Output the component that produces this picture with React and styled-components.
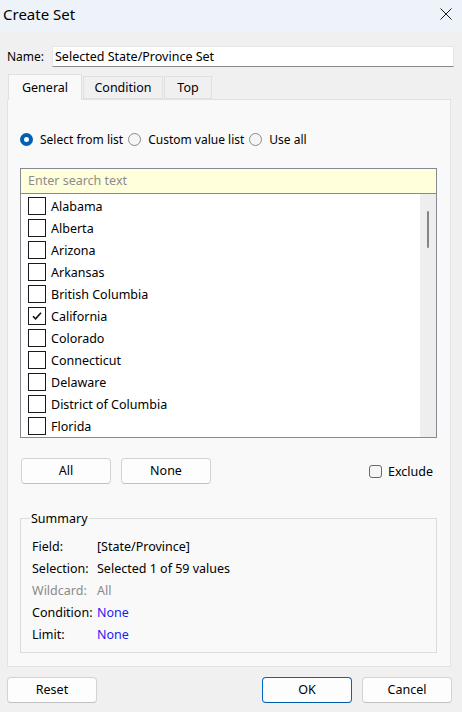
import styled, { createGlobalStyle } from "styled-components";

const GlobalStyle = createGlobalStyle`
  html, body {
    margin: 0;
    padding: 0;
    background: #f0f0f0;
  }
  body {
    font-family: "Noto Sans", "Open Sans", sans-serif;
    font-size: 12px;
    color: #000;
  }
`;

const STATES = [
  "Alabama",
  "Alberta",
  "Arizona",
  "Arkansas",
  "British Columbia",
  "California",
  "Colorado",
  "Connecticut",
  "Delaware",
  "District of Columbia",
  "Florida",
];
const SELECTED = ["California"];

const SUMMARY = [
  { label: "Field:", value: "[State/Province]" },
  { label: "Selection:", value: "Selected 1 of 59 values" },
  { label: "Wildcard:", value: "All", muted: true },
  { label: "Condition:", value: "None", link: true },
  { label: "Limit:", value: "None", link: true },
];

const Dialog = styled.div`
  width: 462px;
  height: 712px;
  display: flex;
  flex-direction: column;
  background: #f0f0f0;
  overflow: hidden;
`;

const TitleBar = styled.div`
  height: 32px;
  flex: none;
  display: flex;
  align-items: center;
  justify-content: space-between;
  padding: 0 10px 0 3px;
  background: #eef3fa;
`;

const Title = styled.span`
  font-size: 15px;
  margin-top: -4px;
`;

const CloseButton = styled.button`
  border: 0;
  background: none;
  padding: 0;
  width: 12px;
  height: 12px;
  margin-top: -4px;
  display: flex;
  svg {
    display: block;
  }
`;

const Body = styled.div`
  flex: 1;
  display: flex;
  flex-direction: column;
  padding: 0 8px 0 7px;
`;

const NameRow = styled.div`
  display: flex;
  align-items: center;
  margin-top: 14px;
`;

const NameLabel = styled.label`
  width: 45px;
  flex: none;
`;

const NameInput = styled.input`
  flex: 1;
  height: 21px;
  box-sizing: border-box;
  border: 1px solid #e6e6e6;
  border-bottom-color: #8a8a8a;
  border-radius: 2px 2px 0 0;
  background: #fff;
  font: inherit;
  font-size: 12.5px;
  padding: 0 2px 1px;
  outline: none;
`;

const TabStrip = styled.div`
  display: flex;
  align-items: flex-end;
  height: 24px;
  margin-top: 8px;
  padding-left: 1px;
  position: relative;
  z-index: 1;
`;

const Tab = styled.div`
  box-sizing: border-box;
  width: ${(p) => p.$width}px;
  height: ${(p) => (p.$active ? 26 : 23)}px;
  margin-bottom: ${(p) => (p.$active ? -1 : 0)}px;
  margin-right: 1px;
  display: flex;
  align-items: center;
  justify-content: center;
  padding-bottom: ${(p) => (p.$active ? 1 : 0)}px;
  border: 1px solid #e0e0e0;
  border-bottom: ${(p) => (p.$active ? "0" : "1px solid #e0e0e0")};
  background: ${(p) => (p.$active ? "#f9f9f9" : "#f0f0f0")};
  font-size: 12.5px;
`;

const Pane = styled.div`
  box-sizing: border-box;
  height: 568px;
  display: flex;
  flex-direction: column;
  padding: 0 13px 0 12px;
  background: #f9f9f9;
  border: 1px solid #e2e2e2;
  margin-right: 3px;
`;

const RadioRow = styled.div`
  display: flex;
  align-items: center;
  margin-top: 31px;
  height: 16px;
`;

const RadioOption = styled.label`
  display: flex;
  align-items: center;
  margin-right: 5px;
`;

const RadioDot = styled.span`
  box-sizing: border-box;
  width: 13px;
  height: 13px;
  border-radius: 50%;
  margin-right: 7px;
  border: ${(p) => (p.$checked ? "4px solid #005fb8" : "1px solid #8a8a8a")};
  background: ${(p) => (p.$checked ? "#fff" : "#f5f5f5")};
`;

const ListBox = styled.div`
  margin-top: 21px;
  height: 270px;
  box-sizing: border-box;
  border: 1px solid #878a92;
  display: flex;
  flex-direction: column;
  background: #fff;
`;

const Search = styled.input`
  height: 25px;
  flex: none;
  box-sizing: border-box;
  border: 0;
  border-bottom: 1px solid #878a92;
  background: #ffffdb;
  font: inherit;
  font-size: 12.5px;
  padding: 0 7px 1px;
  outline: none;
  &::placeholder {
    color: #8c8c8c;
  }
`;

const ListArea = styled.div`
  flex: 1;
  display: flex;
  min-height: 0;
`;

const Rows = styled.div`
  flex: 1;
  padding-top: 1px;
`;

const Row = styled.div`
  height: 22px;
  display: flex;
  align-items: center;
  padding-left: 7px;
  font-size: 12.5px;
`;

const Box = styled.span`
  box-sizing: border-box;
  width: 18px;
  height: 18px;
  border: 1px solid #1a1a1a;
  margin-right: 5px;
  display: flex;
  align-items: center;
  justify-content: center;
`;

const ScrollTrack = styled.div`
  width: 16px;
  flex: none;
  background: #eeeeee;
  display: flex;
  justify-content: center;
  padding-top: 17px;
`;

const ScrollThumb = styled.div`
  width: 2px;
  height: 37px;
  border-radius: 1px;
  background: #858585;
`;

const ActionRow = styled.div`
  display: flex;
  align-items: center;
  margin-top: 20px;
  padding-left: 1px;
`;

const Button = styled.button`
  box-sizing: border-box;
  width: 90px;
  height: 26px;
  margin-right: ${(p) => (p.$last ? 2 : 10)}px;
  border: 1px solid ${(p) => (p.$primary ? "#0067c0" : "#d3d3d3")};
  border-bottom-color: ${(p) => (p.$primary ? "#0058a8" : "#c0c0c0")};
  border-radius: 4px;
  background: #fdfdfd;
  font: inherit;
  font-size: 12.5px;
  color: #000;
  padding: 0 0 1px;
`;

const ExcludeToggle = styled.label`
  margin-left: auto;
  margin-right: 4px;
  display: flex;
  align-items: center;
  font-size: 12.5px;
`;

const SmallBox = styled.span`
  box-sizing: border-box;
  width: 13px;
  height: 13px;
  border: 1px solid #6a6a6a;
  border-radius: 3px;
  background: #f6f6f6;
  margin-right: 6px;
`;

const Summary = styled.fieldset`
  margin: 26px 0 0;
  padding: 8px 9px 7px 11px;
  border: 1px solid #dcdcdc;
  min-width: 0;
`;

const Legend = styled.legend`
  padding: 0 1px;
  margin-left: -2px;
  font-size: 12.5px;
`;

const SummaryRow = styled.div`
  height: 22px;
  display: flex;
  align-items: center;
  font-size: 12.5px;
  color: ${(p) => (p.$muted ? "#8a8a8a" : "#000")};
`;

const SummaryLabel = styled.span`
  width: 65px;
  flex: none;
`;

const SummaryValue = styled.span`
  color: ${(p) => (p.$link ? "#1c1cf5" : "inherit")};
`;

const Footer = styled.div`
  display: flex;
  margin-top: 10px;
`;

const Spacer = styled.div`
  flex: 1;
`;

function Check() {
  return (
    <svg width="12" height="12" viewBox="0 0 12 12">
      <path d="M2 6.2 L4.6 8.8 L10 2.8" fill="none" stroke="#111" strokeWidth="1.6" />
    </svg>
  );
}

export default function App() {
  return (
    <Dialog>
      <GlobalStyle />
      <TitleBar>
        <Title>Create Set</Title>
        <CloseButton aria-label="Close">
          <svg width="12" height="12" viewBox="0 0 12 12">
            <path d="M0.5 0.5 L11.5 11.5 M11.5 0.5 L0.5 11.5" stroke="#1b1b1b" strokeWidth="1" />
          </svg>
        </CloseButton>
      </TitleBar>
      <Body>
        <NameRow>
          <NameLabel>Name:</NameLabel>
          <NameInput defaultValue="Selected State/Province Set" />
        </NameRow>
        <TabStrip>
          <Tab $active $width={74}>General</Tab>
          <Tab $width={80}>Condition</Tab>
          <Tab $width={48}>Top</Tab>
        </TabStrip>
        <Pane>
          <RadioRow>
            <RadioOption>
              <RadioDot $checked />
              Select from list
            </RadioOption>
            <RadioOption>
              <RadioDot />
              Custom value list
            </RadioOption>
            <RadioOption>
              <RadioDot />
              Use all
            </RadioOption>
          </RadioRow>
          <ListBox>
            <Search placeholder="Enter search text" />
            <ListArea>
              <Rows>
                {STATES.map((s) => (
                  <Row key={s}>
                    <Box>{SELECTED.includes(s) && <Check />}</Box>
                    {s}
                  </Row>
                ))}
              </Rows>
              <ScrollTrack>
                <ScrollThumb />
              </ScrollTrack>
            </ListArea>
          </ListBox>
          <ActionRow>
            <Button>All</Button>
            <Button>None</Button>
            <ExcludeToggle>
              <SmallBox />
              Exclude
            </ExcludeToggle>
          </ActionRow>
          <Summary>
            <Legend>Summary</Legend>
            {SUMMARY.map((r) => (
              <SummaryRow key={r.label} $muted={r.muted}>
                <SummaryLabel>{r.label}</SummaryLabel>
                <SummaryValue $link={r.link}>{r.value}</SummaryValue>
              </SummaryRow>
            ))}
          </Summary>
        </Pane>
        <Footer>
          <Button>Reset</Button>
          <Spacer />
          <Button $primary>OK</Button>
          <Button $last>Cancel</Button>
        </Footer>
      </Body>
    </Dialog>
  );
}
